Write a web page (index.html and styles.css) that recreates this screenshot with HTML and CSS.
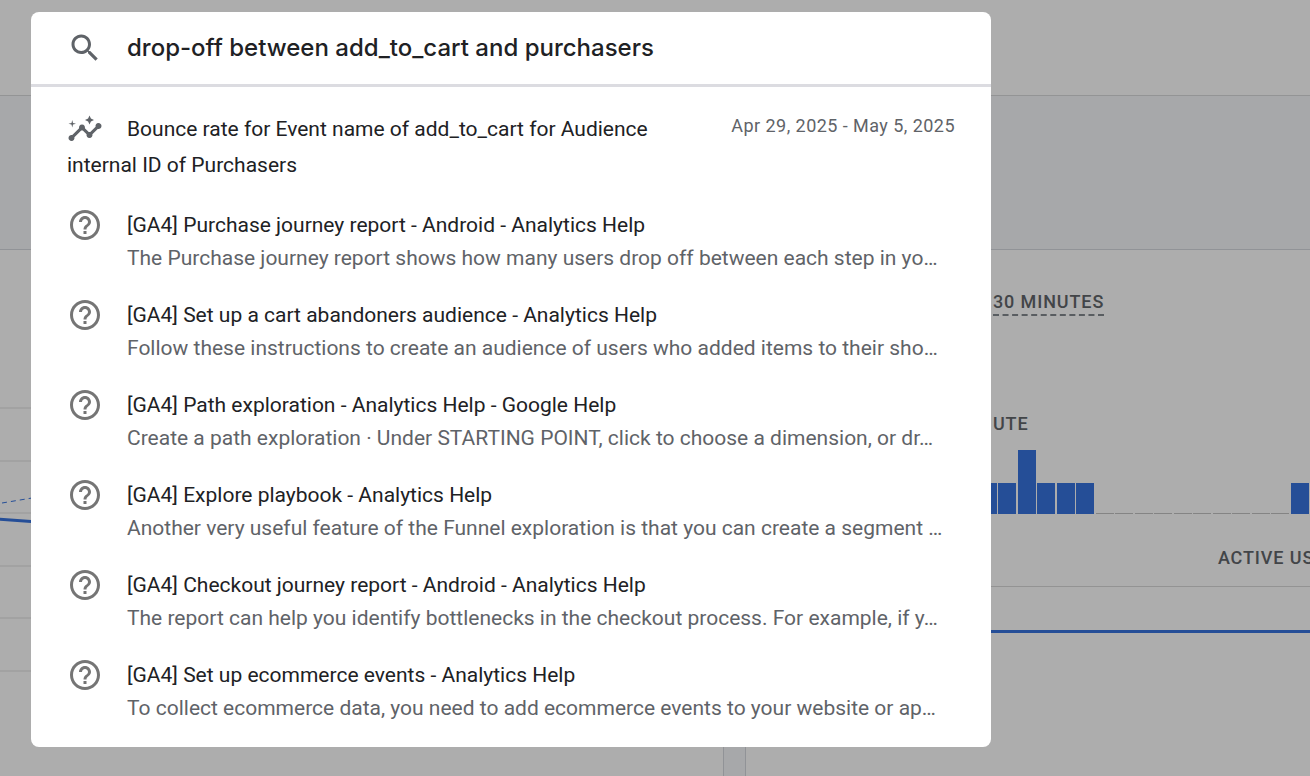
FILE: index.html
```html
<!DOCTYPE html>
<html lang="en">
<head>
<meta charset="utf-8">
<title>Analytics search</title>
<link rel="stylesheet" href="styles.css">
</head>
<body>
<svg class="sprite" aria-hidden="true">
  <symbol id="help" viewBox="0 0 24 24"><path d="M11 18h2v-2h-2v2zm1-16C6.48 2 2 6.48 2 12s4.48 10 10 10 10-4.480 10-10S17.520 2 12 2zm0 18c-4.410 0-8-3.590-8-8s3.590-8 8-8 8 3.590 8 8-3.590 8-8 8zm0-14c-2.210 0-4 1.790-4 4h2c0-1.100.9-2 2-2s2 .9 2 2c0 2-3 1.750-3 5h2c0-2.250 3-2.500 3-5 0-2.210-1.790-4-4-4z"/></symbol>
</svg>

<main class="dashboard">
  <div class="topbar"></div>
  <div class="band"></div>
  <div class="cards">
    <section class="card card-trend">
      <svg class="trend" aria-hidden="true">
        <g class="gridlines">
          <line x1="0" x2="100%" y1="158" y2="158"/>
          <line x1="0" x2="100%" y1="211" y2="211"/>
          <line x1="0" x2="100%" y1="263" y2="263"/>
          <line x1="0" x2="100%" y1="316" y2="316"/>
          <line x1="0" x2="100%" y1="368" y2="368"/>
          <line x1="0" x2="100%" y1="421" y2="421"/>
        </g>
        <line class="previous" x1="2" y1="253" x2="38" y2="247"/>
        <line class="current" x1="-2" y1="269" x2="38" y2="272"/>
      </svg>
    </section>
    <section class="card card-realtime">
      <div class="label-row"><span class="label underlined">30 MINUTES</span></div>
      <div class="label-row minute"><span class="label">UTE</span></div>
      <div class="bars">
        <i class="bar"></i><i class="bar"></i><i class="bar tall"></i><i class="bar"></i><i class="bar"></i><i class="bar"></i>
        <i class="bar none"></i><i class="bar none"></i><i class="bar none"></i><i class="bar none"></i><i class="bar none"></i>
        <i class="bar none"></i><i class="bar none"></i><i class="bar none"></i><i class="bar none"></i><i class="bar none"></i>
        <i class="bar"></i>
      </div>
      <div class="table-head"><span class="label">ACTIVE US</span></div>
      <div class="meter"></div>
    </section>
  </div>
</main>

<div class="scrim"></div>

<div class="dialog" role="dialog" aria-label="Search">
  <form class="search">
    <svg class="icon" viewBox="0 0 24 24" aria-hidden="true"><path d="M15.500 14h-.79l-.28-.27C15.410 12.590 16 11.110 16 9.500 16 5.910 13.090 3 9.500 3S3 5.910 3 9.500 5.910 16 9.500 16c1.610 0 3.090-.59 4.230-1.570l.27.28v.79l5 4.990L20.490 19l-4.990-5zm-6 0C7.010 14 5 11.990 5 9.500S7.010 5 9.500 5 14 7.010 14 9.500 11.990 14 9.500 14z"/></svg>
    <input class="query" type="text" aria-label="Search" spellcheck="false" value="drop-off between add_to_cart and purchasers">
  </form>
  <div class="results">
    <a class="insight" href="#">
      <span class="insight-text"><svg class="icon icon-inline" viewBox="0 0 24 24" aria-hidden="true"><path d="M21 8c-1.450 0-2.260 1.440-1.930 2.510l-3.550 3.560c-.3-.09-.74-.09-1.040 0l-2.550-2.550C12.270 10.450 11.460 9 10 9c-1.450 0-2.270 1.440-1.930 2.520l-4.560 4.550C2.440 15.740 1 16.550 1 18c0 1.100.9 2 2 2 1.450 0 2.260-1.440 1.930-2.510l4.550-4.560c.3.09.74.09 1.040 0l2.550 2.550C12.730 16.550 13.540 18 15 18c1.450 0 2.270-1.440 1.930-2.520l3.560-3.550C21.560 12.260 23 11.450 23 10c0-1.100-.9-2-2-2z"/><path d="M15 9l.94-2.070L18 6l-2.060-.93L15 3l-.92 2.070L12 6l2.080.93zM3.500 11L4 9l2-.5L4 8l-.5-2L3 8l-2 .5L3 9z"/></svg>Bounce rate for Event name of add_to_cart for Audience internal ID of Purchasers</span>
      <span class="date">Apr 29, 2025 - May 5, 2025</span>
    </a>
    <a class="result" href="#">
      <svg class="icon icon-help" aria-hidden="true"><use href="#help"/></svg>
      <span class="body"><span class="title">[GA4] Purchase journey report - Android - Analytics Help</span><span class="desc">The Purchase journey report shows how many users drop off between each step in yo…</span></span>
    </a>
    <a class="result" href="#">
      <svg class="icon icon-help" aria-hidden="true"><use href="#help"/></svg>
      <span class="body"><span class="title">[GA4] Set up a cart abandoners audience - Analytics Help</span><span class="desc">Follow these instructions to create an audience of users who added items to their sho…</span></span>
    </a>
    <a class="result" href="#">
      <svg class="icon icon-help" aria-hidden="true"><use href="#help"/></svg>
      <span class="body"><span class="title">[GA4] Path exploration - Analytics Help - Google Help</span><span class="desc">Create a path exploration · Under STARTING POINT, click to choose a dimension, or dr…</span></span>
    </a>
    <a class="result" href="#">
      <svg class="icon icon-help" aria-hidden="true"><use href="#help"/></svg>
      <span class="body"><span class="title">[GA4] Explore playbook - Analytics Help</span><span class="desc">Another very useful feature of the Funnel exploration is that you can create a segment …</span></span>
    </a>
    <a class="result" href="#">
      <svg class="icon icon-help" aria-hidden="true"><use href="#help"/></svg>
      <span class="body"><span class="title">[GA4] Checkout journey report - Android - Analytics Help</span><span class="desc">The report can help you identify bottlenecks in the checkout process. For example, if y…</span></span>
    </a>
    <a class="result" href="#">
      <svg class="icon icon-help" aria-hidden="true"><use href="#help"/></svg>
      <span class="body"><span class="title">[GA4] Set up ecommerce events - Analytics Help</span><span class="desc">To collect ecommerce data, you need to add ecommerce events to your website or ap…</span></span>
    </a>
  </div>
</div>
</body>
</html>
```
FILE: styles.css
```css
* { box-sizing: border-box; }

body {
  margin: 0;
  overflow: hidden;
  font-family: Roboto, "Liberation Sans", sans-serif;
  font-size: 21px;
  color: #202124;
}

.sprite { position: absolute; width: 0; height: 0; }

/* Dashboard */
.dashboard {
  display: flex;
  flex-direction: column;
  min-height: 100vh;
  background: #eff1f4;
}
.topbar { height: 96px; background: #f8f8f8; border-bottom: 1px solid #d3d4d6; }
.band { height: 153px; }
.cards { flex: 1; display: flex; gap: 21px; }
.card { background: #f8f8f8; border: 0 solid #d0d3d8; border-top-width: 1px; }
.card-trend { flex: 724 1 0; border-right-width: 1px; }
.card-realtime { flex: 565 1 0; min-width: 0; border-left-width: 1px; padding-top: 40px; overflow: hidden; }

.trend { display: block; width: 100%; height: 480px; }
.gridlines { stroke: #e8e8e8; stroke-width: 2; }
.previous { stroke: #3570d9; stroke-width: 1; stroke-dasharray: 5 4; }
.current { stroke: #3570d9; stroke-width: 3; }

.label {
  display: inline-block;
  font-size: 18px;
  font-weight: 500;
  line-height: 24px;
  letter-spacing: 0.05em;
  color: #5f6368;
  white-space: nowrap;
}
.label-row { display: flex; padding-left: 247px; }
.underlined { border-bottom: 2px dashed #80868b; }
.minute { margin-top: 96px; }

.bars {
  display: flex;
  align-items: flex-end;
  justify-content: space-between;
  height: 64px;
  margin-top: 14px;
  padding: 0 1px 0 233px;
}
.bar { flex: none; width: 18px; height: 31px; background: #3570d9; }
.bar.tall { height: 64px; }
.bar.none { height: 1px; background: #bdbdbd; }

.table-head { margin-top: 32px; padding: 0 0 16px 472px; border-bottom: 1px solid #d3d3d3; display: flex; }
.meter { height: 3px; margin-top: 43px; background: #3570d9; }

/* Modal layer */
.scrim { position: fixed; inset: 0; background: rgba(0, 0, 0, 0.3); }

.dialog {
  position: absolute;
  top: 12px;
  left: 31px;
  width: 960px;
  max-width: calc(100vw - 62px);
  background: #fff;
  border-radius: 8px;
}

.icon { flex: none; width: 36px; height: 36px; fill: #5f6368; }
.icon-help { fill: #757575; }
.icon-inline { float: left; margin-right: 24px; }

.search {
  display: flex;
  align-items: center;
  gap: 24px;
  padding: 18px 36px;
  border-bottom: 3px solid #dcdce1;
}
.query {
  flex: 1;
  min-width: 0;
  height: 36px;
  padding: 0 0 2px;
  border: 0;
  outline: 0;
  background: none;
  font-family: Inter, Roboto, sans-serif;
  font-size: 24px;
  font-weight: 500;
  color: #202124;
}

.results { display: flex; flex-direction: column; gap: 24px; padding: 24px 36px; }
.results a { color: inherit; text-decoration: none; }

.insight { display: flex; gap: 36px; line-height: 36px; }
.insight-text { flex: 1; }
.date { font-size: 18px; line-height: 30px; letter-spacing: 0.025em; color: #5f6368; white-space: nowrap; }

.result { display: flex; gap: 24px; }
.body { flex: 1; min-width: 0; white-space: nowrap; }
.title, .desc { display: block; }
.title { line-height: 36px; }
.desc { line-height: 30px; color: #5f6368; }
```
